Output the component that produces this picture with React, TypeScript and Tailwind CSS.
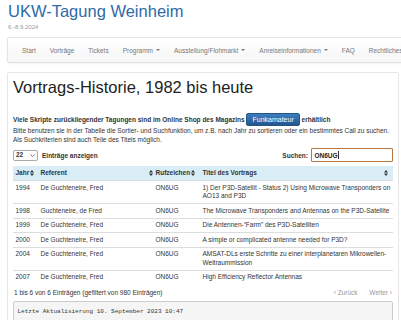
import React from 'react'

type Row = {
  jahr: string
  referent: string
  call: string
  titel: string
}

const rows: Row[] = [
  {
    jahr: '1994',
    referent: 'De Guchteneire, Fred',
    call: 'ON6UG',
    titel: '1) Der P3D-Satellit - Status 2) Using Microwave Transponders on AO13 and P3D'
  },
  {
    jahr: '1998',
    referent: 'Guchteneire, de Fred',
    call: 'ON6UG',
    titel: 'The Microwave Transponders and Antennas on the P3D-Satellite'
  },
  {
    jahr: '1999',
    referent: 'De Guchteneire, Fred',
    call: 'ON6UG',
    titel: 'Die Antennen-\u201cFarm\u201d des P3D-Satelliten'
  },
  {
    jahr: '2000',
    referent: 'De Guchteneire, Fred',
    call: 'ON6UG',
    titel: 'A simple or complicated antenne needed for P3D?'
  },
  {
    jahr: '2004',
    referent: 'De Guchteneire, Fred',
    call: 'ON6UG',
    titel: 'AMSAT-DLs erste Schritte zu einer interplanetaren Mikrowellen-Weltraummission'
  },
  {
    jahr: '2007',
    referent: 'De Guchteneire, Fred',
    call: 'ON6UG',
    titel: 'High Efficiency Reflector Antennas'
  }
]

const navItems = [
  { label: 'Start' },
  { label: 'Vorträge' },
  { label: 'Tickets' },
  { label: 'Programm', caret: true },
  { label: 'Ausstellung/Flohmarkt', caret: true },
  { label: 'Anreiseinformationen', caret: true },
  { label: 'FAQ' },
  { label: 'Rechtliches' }
]

function SortIcon({ className }: { className: string }) {
  return (
    <svg
      width="4"
      height="6"
      viewBox="0 0 4 6"
      className={`absolute top-[4px] ${className}`}
    >
      <polygon points="0,2.4 2,0 4,2.4" fill="#333" />
      <polygon points="0,3.6 4,3.6 2,6" fill="#333" />
    </svg>
  )
}

function Caret() {
  return (
    <span className="ml-[3px] inline-block w-0 h-0 border-t-[2.5px] border-t-[#777] border-x-[2px] border-x-transparent align-middle" />
  )
}

export default function App() {
  return (
    <div className="w-[401px] h-[320px] overflow-hidden bg-white text-[#333] font-['Liberation_Sans',Arial,sans-serif] text-[6.5px]">
      <header className="pl-[8px]">
        <h1 className="mt-[1.5px] text-[16.5px] leading-[19px] text-[#2f6aa6] font-normal">
          UKW-Tagung Weinheim
        </h1>
        <p className="mt-[2.5px] text-[6px] leading-[8px] text-[#999]">6.-8.9.2024</p>
      </header>

      <nav className="mt-[6px] ml-[7px] w-[420px] h-[26px] flex items-center pl-[7px] whitespace-nowrap border border-[#e3e3e3] rounded-[2px] bg-gradient-to-b from-white to-[#f6f6f6] shadow-[0_1px_2px_rgba(0,0,0,0.05)]">
        {navItems.map((item) => (
          <a key={item.label} href="#" className="px-[7px] text-[#777] leading-[9px] flex items-center">
            {item.label}
            {item.caret && <Caret />}
          </a>
        ))}
      </nav>

      <section className="mt-[9px] ml-[7px] mr-[2px] border border-[#e6e6e6] rounded-[2px] px-[5px] pb-[20px]">
        <h2 className="mt-[5px] text-[16.5px] leading-[19px] font-normal text-[#222]">
          Vortrags-Historie, 1982 bis heute
        </h2>

        <p className="mt-[15.5px] leading-[13px] font-bold whitespace-nowrap">
          Viele Skripte zurückliegender Tagungen sind im Online Shop des Magazins{' '}
          <a
            href="#"
            className="inline-block align-middle h-[13px] px-[5px] leading-[11px] font-normal text-[7px] text-white rounded-[2px] border border-[#245580] bg-gradient-to-b from-[#3c7fc0] to-[#245690]"
          >
            Funkamateur
          </a>{' '}
          erhältlich
        </p>
        <p className="leading-[9px] whitespace-nowrap">
          Bitte benutzen sie in der Tabelle die Sortier- und Suchfunktion, um z.B. nach Jahr zu sortieren oder ein bestimmtes Call zu suchen.
        </p>
        <p className="leading-[9px]">Als Suchkriterien sind auch Teile des Titels möglich.</p>

        <div className="mt-[4px] h-[14px] flex items-center justify-between">
          <div className="flex items-center gap-[4px]">
            <div className="w-[25px] h-[11.5px] border border-[#aaa] rounded-[2px] bg-white flex items-center justify-between px-[2px]">
              <span className="font-bold leading-[8px]">22</span>
              <svg width="5" height="3" viewBox="0 0 5 3">
                <polyline points="0.5,0.5 2.5,2.5 4.5,0.5" fill="none" stroke="#555" strokeWidth="0.8" />
              </svg>
            </div>
            <span className="font-bold leading-[9px]">Einträge anzeigen</span>
          </div>
          <div className="flex items-center gap-[3px]">
            <span className="font-bold leading-[9px]">Suchen:</span>
            <div className="w-[82px] h-[14px] border-[1.5px] border-[#b8783f] rounded-[1px] bg-white flex items-center pl-[2.5px]">
              <span className="font-bold text-[#222] leading-[9px]">ON6UG</span>
              <span className="w-px h-[8px] bg-[#333]" />
            </div>
          </div>
        </div>

        <table className="mt-[4px] w-full table-fixed border-collapse">
          <colgroup>
            <col className="w-[25px]" />
            <col className="w-[115px]" />
            <col className="w-[47px]" />
            <col />
          </colgroup>
          <thead>
            <tr className="bg-[#d9edf7]">
              <th className="relative text-left font-bold px-[2.5px] py-[2.75px] leading-[8.5px]">
                Jahr
                <SortIcon className="right-[4px]" />
              </th>
              <th className="relative text-left font-bold px-[2.5px] py-[2.75px] leading-[8.5px]">
                Referent
                <SortIcon className="right-[0.5px]" />
              </th>
              <th className="relative text-left font-bold px-[2.5px] py-[2.75px] leading-[8.5px]">
                Rufzeichen
                <SortIcon className="right-[5px]" />
              </th>
              <th className="relative text-left font-bold px-[2.5px] py-[2.75px] leading-[8.5px]">
                Titel des Vortrags
                <SortIcon className="right-[5px]" />
              </th>
            </tr>
          </thead>
          <tbody>
            {rows.map((r) => (
              <tr key={r.jahr} className="border-t border-[#dddddd]">
                <td className="align-top px-[2.5px] py-[2.5px] leading-[8.5px]">{r.jahr}</td>
                <td className="align-top px-[2.5px] py-[2.5px] leading-[8.5px]">{r.referent}</td>
                <td className="align-top px-[2.5px] py-[2.5px] leading-[8.5px]">{r.call}</td>
                <td className="align-top px-[2.5px] py-[2.5px] leading-[8.5px]">{r.titel}</td>
              </tr>
            ))}
          </tbody>
        </table>

        <div className="mt-[3.5px] flex items-center justify-between leading-[9px]">
          <span className="pl-[1px]">1 bis 6 von 6 Einträgen (gefiltert von 980 Einträgen)</span>
          <span className="text-[#999] pr-[1px]">
            ‹ Zurück <span className="ml-[10px]">Weiter ›</span>
          </span>
        </div>

        <pre className="mt-[4.5px] border border-[#ccc] rounded-[2px] bg-[#f5f5f5] px-[3.5px] py-[6px] text-[6px] leading-[8px] text-[#333] font-['Liberation_Mono','Courier_New',monospace]">
          Letzte Aktualisierung 10. September 2023 10:47
        </pre>
      </section>
    </div>
  )
}
